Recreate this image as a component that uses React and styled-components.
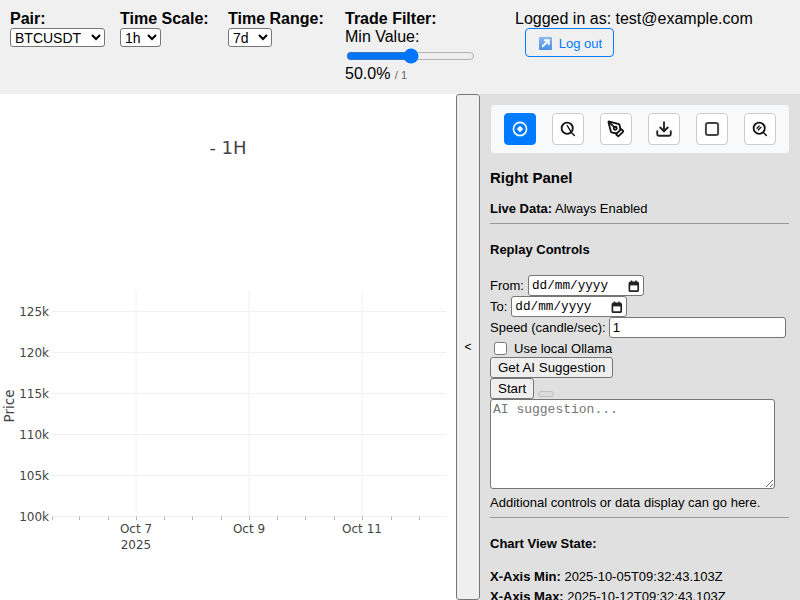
import React from "react";
import styled, { createGlobalStyle } from "styled-components";
import { PenTool, Download } from "lucide-react";

const Global = createGlobalStyle`
  html, body { margin: 0; padding: 0; height: 100%; overflow: hidden; }
  body { font-family: "Liberation Sans", Arial, sans-serif; font-size: 16px; color: #000; }
  #root { height: 100%; }
`;

const Page = styled.div`
  width: 800px;
  height: 600px;
  display: flex;
  flex-direction: column;
  overflow: hidden;
`;

const Header = styled.header`
  height: 94px;
  flex: none;
  box-sizing: border-box;
  background: #f0f0f0;
  padding: 10px 0 0 10px;
  display: flex;
  align-items: flex-start;
`;

const Field = styled.div`
  display: flex;
  flex-direction: column;
  align-items: flex-start;
  width: ${(p) => p.$w}px;
  flex: none;
`;

const FieldLabel = styled.label`
  font-weight: bold;
  line-height: 18px;
`;

const Select = styled.select`
  font-family: "Liberation Sans", Arial, sans-serif;
  font-size: 14px;
  height: 19px;
  box-sizing: border-box;
  background: #fff;
  border: 1px solid #767676;
  border-radius: 3px;
  padding: 0;
  width: ${(p) => p.$w}px;
`;

const PlainText = styled.div`
  line-height: 18px;
`;

const Slider = styled.input`
  width: 129px;
  margin: 2px 0 1px 1px;
  height: 16px;
  display: block;
  accent-color: #0075ff;
`;

const Percent = styled.div`
  line-height: 18px;
`;

const Small = styled.span`
  font-size: 11px;
  color: #666;
`;

const Account = styled.div`
  display: flex;
  flex-direction: column;
  align-items: flex-start;
  margin-left: -1px;
`;

const LogoutButton = styled.button`
  margin: 0 0 0 10px;
  width: 89px;
  height: 29px;
  box-sizing: border-box;
  display: flex;
  align-items: center;
  justify-content: center;
  gap: 7px;
  padding: 2px 0 0 2px;
  background: #f0f0f0;
  border: 1px solid #007bff;
  border-radius: 4px;
  color: #007bff;
  font-family: "Liberation Sans", Arial, sans-serif;
  font-size: 13px;
`;

const Main = styled.main`
  flex: 1;
  display: flex;
  min-height: 0;
`;

const ChartArea = styled.section`
  width: 456px;
  flex: none;
  background: #fff;
`;

const ChartSvg = styled.svg`
  display: block;
`;

const Toggle = styled.button`
  width: 24px;
  flex: none;
  height: 506px;
  box-sizing: border-box;
  padding: 0;
  background: #efefef;
  border: 1px solid #767676;
  border-radius: 3px;
  font-family: "Liberation Sans", Arial, sans-serif;
  font-size: 12px;
  color: #000;
`;

const Panel = styled.aside`
  flex: 1;
  min-width: 0;
  background: #e0e0e0;
  box-sizing: border-box;
  padding: 11px 10px 0;
  font-size: 13px;
  overflow: hidden;
`;

const Toolbar = styled.div`
  height: 48px;
  width: 298px;
  margin-left: 1px;
  box-sizing: border-box;
  background: #f8f9fa;
  border-radius: 4px;
  padding: 0 13px;
  display: flex;
  align-items: center;
  justify-content: space-between;
`;

const ToolButton = styled.button`
  width: 32px;
  height: 32px;
  box-sizing: border-box;
  padding: 0;
  display: flex;
  align-items: center;
  justify-content: center;
  border-radius: 4px;
  border: 1px solid ${(p) => (p.$active ? "#007bff" : "#ccc")};
  background: ${(p) => (p.$active ? "#007bff" : "#fff")};
  color: ${(p) => (p.$active ? "#fff" : "#111")};
`;

const PanelTitle = styled.h3`
  font-size: 15px;
  line-height: 17px;
  font-weight: bold;
  margin: 16px 0 15px;
`;

const Line = styled.div`
  line-height: 16px;
`;

const Rule = styled.hr`
  margin: 6px 1px 0 0;
  border: none;
  border-top: 1px solid #999;
  height: 0;
`;

const SectionTitle = styled.h4`
  font-size: 13px;
  line-height: 16px;
  font-weight: bold;
  margin: ${(p) => p.$m};
`;

const InlineRow = styled.div`
  display: flex;
  align-items: center;
  height: 21px;
  gap: 4px;
  white-space: nowrap;
`;

const DateBox = styled.div`
  width: 116px;
  height: 21px;
  box-sizing: border-box;
  display: flex;
  align-items: center;
  border: 1px solid #767676;
  border-radius: 3px;
  background: #fff;
  padding: 0 3px;
`;

const DateText = styled.input`
  flex: 1;
  min-width: 0;
  border: none;
  outline: none;
  padding: 0;
  background: transparent;
  font-family: "Liberation Mono", monospace;
  font-size: 12.7px;
  color: #000;
`;

const SpeedInput = styled.input`
  width: 177px;
  height: 21px;
  margin-left: -1px;
  box-sizing: border-box;
  font-family: "Liberation Sans", Arial, sans-serif;
  font-size: 13.33px;
  border: 1px solid #767676;
  border-radius: 3px;
  background: #fff;
  padding: 1px 3px;
`;

const CheckRow = styled.label`
  display: flex;
  align-items: center;
  height: 17px;
  padding-left: 4px;
  margin: 2px 0 0;
`;

const Check = styled.input`
  width: 13px;
  height: 13px;
  margin: 0 7px 0 0;
`;

const PlainButton = styled.button`
  height: 21px;
  box-sizing: border-box;
  padding: 1px 7px;
  display: block;
  font-family: "Liberation Sans", Arial, sans-serif;
  font-size: 13.33px;
  background: #efefef;
  border: 1px solid #767676;
  border-radius: 3px;
  color: #000;
`;

const ButtonRow = styled.div`
  display: flex;
  align-items: flex-end;
  gap: 4px;
`;

const EmptyButton = styled.button`
  width: 16px;
  height: 6px;
  box-sizing: border-box;
  padding: 0;
  margin-bottom: 2px;
  background: #dcdcdc;
  border: 1px solid #c0c0c0;
  border-radius: 3px;
`;

const Suggestion = styled.textarea`
  display: block;
  width: 285px;
  height: 90px;
  box-sizing: border-box;
  font-family: "Liberation Mono", monospace;
  font-size: 13px;
  border: 1px solid #767676;
  border-radius: 3px;
  background: #fff;
  padding: 2px;
  margin: 0;
`;

const Note = styled.div`
  line-height: 16px;
  margin-top: 6px;
`;

const StateLine = styled.div`
  line-height: 16px;
  margin-top: ${(p) => p.$m || 0}px;
  white-space: nowrap;
`;

const chartFont = `"DejaVu Sans", Verdana, sans-serif`;
const yTicks = [["125k", 311], ["120k", 352], ["115k", 393], ["110k", 434], ["105k", 475], ["100k", 516]];
const gridX = [136, 249, 362];
const minorX = [52, 79, 108, 136, 164, 192, 221, 249, 277, 305, 334, 362, 391, 419];

function Chart() {
  return (
    <ChartSvg width="456" height="506" viewBox="0 0 456 506">
      <text x="228" y="60" textAnchor="middle" fontFamily={chartFont} fontSize="18" fill="#444">- 1H</text>
      <g stroke="#eef0f4" strokeWidth="1">
        {gridX.map((x) => <line key={x} x1={x} x2={x} y1="196" y2="422" />)}
        {yTicks.map(([t, y]) => <line key={t} x1="52" x2="446" y1={y - 94 + 0.5} y2={y - 94 + 0.5} />)}
      </g>
      <g stroke="#b4b4b4" strokeWidth="1">
        {minorX.map((x) => <line key={x} x1={x + 0.5} x2={x + 0.5} y1="422.5" y2="426" />)}
      </g>
      <g fontFamily={chartFont} fontSize="12" fill="#444">
        {yTicks.map(([t, y]) => <text key={t} x="49" y={y - 94 + 5} textAnchor="end">{t}</text>)}
        <text x="136" y="439" textAnchor="middle">Oct 7</text>
        <text x="136" y="455" textAnchor="middle">2025</text>
        <text x="249" y="439" textAnchor="middle">Oct 9</text>
        <text x="362" y="439" textAnchor="middle">Oct 11</text>
        <text x="14" y="312" fontSize="13.5" textAnchor="middle" transform="rotate(-90 14 312)">Price</text>
      </g>
    </ChartSvg>
  );
}

const Ico = ({ children }) => (
  <svg width="20" height="20" viewBox="0 0 20 20" fill="none" stroke="currentColor" strokeWidth="1.8" strokeLinecap="round" strokeLinejoin="round">
    {children}
  </svg>
);

const CalendarGlyph = () => (
  <svg width="14" height="14" viewBox="0 0 14 14" fill="none">
    <rect x="3.4" y="3.4" width="8.8" height="8.8" rx="1" stroke="#222" strokeWidth="1.7" />
    <path d="M3 5.2h9.6" stroke="#222" strokeWidth="2.4" />
    <path d="M5.5 1.5v2M10 1.5v2" stroke="#222" strokeWidth="1.5" />
  </svg>
);

const tools = [
  <Ico key="a"><circle cx="10" cy="10" r="6.6" strokeWidth="1.6" /><path d="M10 6.8 13.2 10 10 13.2 6.8 10Z" fill="currentColor" stroke="none" /></Ico>,
  <Ico key="b"><circle cx="9.2" cy="9.2" r="5.6" /><path d="m13.4 13.4 3 3M9.2 6.5l4.2 6.9" strokeWidth="1.4" /></Ico>,
  <PenTool key="c" size={18} strokeWidth={2.4} color="#111" />,
  <Download key="d" size={18} strokeWidth={2.5} color="#222" />,
  <Ico key="e"><rect x="3.9" y="3.9" width="12.2" height="12.2" rx="2" strokeWidth="2" stroke="#444" /></Ico>,
  <Ico key="f"><circle cx="9.2" cy="9.2" r="5.6" /><path d="m13.4 13.4 3 3" strokeWidth="1.4" /><path d="M7 9.2 9.2 7M8.2 11 11 8.2" strokeWidth="1.3" /></Ico>,
];

export default function App() {
  return (
    <Page>
      <Global />
      <Header>
        <Field $w={110}>
          <FieldLabel>Pair:</FieldLabel>
          <Select $w={95} defaultValue="BTCUSDT"><option>BTCUSDT</option></Select>
        </Field>
        <Field $w={108}>
          <FieldLabel>Time Scale:</FieldLabel>
          <Select $w={41} defaultValue="1h"><option>1h</option></Select>
        </Field>
        <Field $w={117}>
          <FieldLabel>Time Range:</FieldLabel>
          <Select $w={44} defaultValue="7d"><option>7d</option></Select>
        </Field>
        <Field $w={171}>
          <FieldLabel>Trade Filter:</FieldLabel>
          <PlainText>Min Value:</PlainText>
          <Slider type="range" min="0" max="100" defaultValue="50" />
          <Percent>50.0% <Small>/ 1</Small></Percent>
        </Field>
        <Account>
          <PlainText>Logged in as: test@example.com</PlainText>
          <LogoutButton>
            <svg width="13" height="13" viewBox="0 0 14 14">
              <defs>
                <linearGradient id="g" x1="0" y1="0" x2="0" y2="1">
                  <stop offset="0" stopColor="#8ab8f0" />
                  <stop offset="1" stopColor="#4a8fe4" />
                </linearGradient>
              </defs>
              <rect width="14" height="14" rx="1" fill="url(#g)" />
              <path d="M3.5 10.5 9.5 4.5M5.5 3.5h5V8.5" stroke="#fff" strokeWidth="2" fill="none" />
            </svg>
            Log out
          </LogoutButton>
        </Account>
      </Header>
      <Main>
        <ChartArea><Chart /></ChartArea>
        <Toggle>&lt;</Toggle>
        <Panel>
          <Toolbar>
            {tools.map((icon, i) => <ToolButton key={i} $active={i === 0}>{icon}</ToolButton>)}
          </Toolbar>
          <PanelTitle>Right Panel</PanelTitle>
          <Line><b>Live Data:</b> Always Enabled</Line>
          <Rule />
          <SectionTitle $m="18px 0 17px">Replay Controls</SectionTitle>
          <InlineRow>From: <DateBox><DateText readOnly value="dd/mm/yyyy" /><CalendarGlyph /></DateBox></InlineRow>
          <InlineRow>To: <DateBox><DateText readOnly value="dd/mm/yyyy" /><CalendarGlyph /></DateBox></InlineRow>
          <InlineRow>Speed (candle/sec): <SpeedInput type="number" defaultValue="1" /></InlineRow>
          <CheckRow><Check type="checkbox" />Use local Ollama</CheckRow>
          <PlainButton>Get AI Suggestion</PlainButton>
          <ButtonRow><PlainButton>Start</PlainButton><EmptyButton /></ButtonRow>
          <Suggestion placeholder="AI suggestion..." />
          <Note>Additional controls or data display can go here.</Note>
          <Rule />
          <SectionTitle $m="18px 0 0">Chart View State:</SectionTitle>
          <StateLine $m={17}><b>X-Axis Min:</b> 2025-10-05T09:32:43.103Z</StateLine>
          <StateLine $m={4}><b>X-Axis Max:</b> 2025-10-12T09:32:43.103Z</StateLine>
        </Panel>
      </Main>
    </Page>
  );
}
